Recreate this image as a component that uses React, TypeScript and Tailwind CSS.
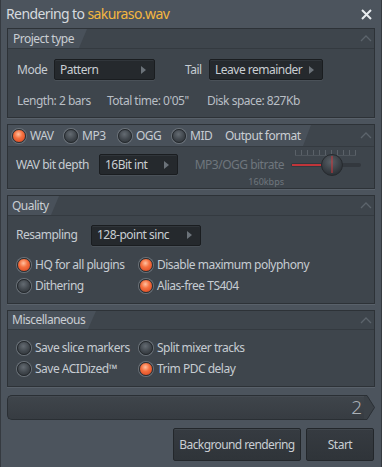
import React from "react";

function Radio({ on }: { on: boolean }) {
  return on ? (
    <span className="inline-block w-[14px] h-[14px] rounded-full shrink-0 border border-[#2b2f33] bg-[radial-gradient(circle_at_45%_35%,#ffc0a0_0%,#f5703f_40%,#d4401c_100%)] shadow-[0_0_0_1px_#6a7178]" />
  ) : (
    <span className="inline-block w-[14px] h-[14px] rounded-full shrink-0 border border-[#24282c] bg-[radial-gradient(circle_at_45%_35%,#646b72_0%,#40464c_55%,#2e3337_100%)] shadow-[0_0_0_1px_#6a7178]" />
  );
}

function Arrow() {
  return (
    <svg width="5" height="8" viewBox="0 0 5 8" className="shrink-0">
      <path d="M0 0 L5 4 L0 8 Z" fill="#6b7279" />
    </svg>
  );
}

function Dropdown({ text, w }: { text: string; w: string }) {
  return (
    <div
      className={`${w} h-[21px] shrink-0 flex items-center justify-between pl-[5px] pr-[8px] bg-[#25292d] border border-[#1a1d20] rounded-[2px] shadow-[inset_0_1px_0_#30353a,0_1px_0_#4a5158] text-[#c9ced3]`}
    >
      <span className="whitespace-nowrap">{text}</span>
      <Arrow />
    </div>
  );
}

function Chevron() {
  return (
    <svg width="12" height="7" viewBox="0 0 12 7" className="shrink-0">
      <path d="M1 6 L6 1 L11 6" fill="none" stroke="#5c646c" strokeWidth="1.3" />
    </svg>
  );
}

function Panel({
  tab,
  tabW,
  headerH,
  children,
  bodyClass,
}: {
  tab: React.ReactNode;
  tabW: string;
  headerH: string;
  children: React.ReactNode;
  bodyClass: string;
}) {
  return (
    <div className="bg-[#3e454c] border border-[#2d3237] shadow-[0_1px_0_#59616a]">
      <div className={`${headerH} flex items-stretch justify-between border-b border-[#343a40]`}>
        <div
          className={`${tabW} shrink-0 flex items-center pl-[4px] bg-[#49515a] [clip-path:polygon(0_0,100%_0,calc(100%-8px)_100%,0_100%)] text-[#c9ced3] whitespace-nowrap`}
        >
          {tab}
        </div>
        <div className="flex items-center pr-[2px]">
          <Chevron />
        </div>
      </div>
      <div className={bodyClass}>{children}</div>
    </div>
  );
}

function RadioItem({ on, label, w }: { on: boolean; label: string; w?: string }) {
  return (
    <div className={`flex items-center gap-[4px] whitespace-nowrap ${w ?? ""}`}>
      <Radio on={on} />
      <span className="text-[#c6ccd2]">{label}</span>
    </div>
  );
}

const ticks = [0, 6, 12, 18, 24, 30, 36, 42, 48, 54, 60];

export default function App() {
  return (
    <div className="w-[382px] h-[467px] bg-[#4c545d] border-x border-[#353a40] flex flex-col font-['Noto_Sans',sans-serif] text-[12px] tracking-[-0.5px] leading-none text-[#c6ccd2] overflow-hidden">
      {/* Title bar */}
      <div className="h-[28px] flex items-center justify-between pl-[5px] pr-[9px] shrink-0">
        <div className="text-[14px] tracking-[-0.6px] text-[#d6dadf] whitespace-nowrap">
          Rendering to <span className="text-[#f4b640]">sakuraso.wav</span>
        </div>
        <svg width="11" height="11" viewBox="0 0 11 11">
          <path d="M1 1 L10 10 M10 1 L1 10" stroke="#e8ecef" strokeWidth="2" />
        </svg>
      </div>

      <div className="flex flex-col px-[6px] gap-[6px]">
        {/* Project type */}
        <Panel
          tab={<span className="pl-[1px]">Project type</span>}
          tabW="w-[79px]"
          headerH="h-[20px]"
          bodyClass="h-[68px] flex flex-col pl-[9px] pt-[10px]"
        >
          <div className="flex items-center h-[21px]">
            <span className="w-[37px] whitespace-nowrap">Mode</span>
            <Dropdown text="Pattern" w="w-[101px]" />
            <span className="ml-[30px] w-[24px] whitespace-nowrap">Tail</span>
            <Dropdown text="Leave remainder" w="w-[114px]" />
          </div>
          <div className="flex items-center mt-[15px] text-[#b9bfc5] whitespace-nowrap">
            <span className="w-[90px]">Length: 2 bars</span>
            <span className="w-[100px]">Total time: 0'05''</span>
            <span>Disk space: 827Kb</span>
          </div>
        </Panel>

        {/* Output format */}
        <Panel
          tab={
            <div className="flex items-center">
              <RadioItem on label="WAV" w="w-[52px]" />
              <RadioItem on={false} label="MP3" w="w-[54px]" />
              <RadioItem on={false} label="OGG" w="w-[54px]" />
              <RadioItem on={false} label="MID" w="w-[53px]" />
              <span>Output format</span>
            </div>
          }
          tabW="w-[303px]"
          headerH="h-[22px]"
          bodyClass="h-[41px] flex items-start pl-[8px] pt-[7px]"
        >
          <span className="w-[83px] h-[21px] flex items-center whitespace-nowrap">WAV bit depth</span>
          <Dropdown text="16Bit int" w="w-[79px]" />
          <div className="w-[91px] flex flex-col items-end ml-[15px] mt-[5px] whitespace-nowrap">
            <span className="text-[#6f767d]">MP3/OGG bitrate</span>
            <span className="text-[9px] tracking-normal text-[#6f767d] mt-[6px]">160kbps</span>
          </div>
          <svg width="74" height="32" viewBox="0 0 74 32" className="ml-[5px] -mt-[7px] shrink-0">
            {ticks.map((x, i) => (
              <line key={i} x1={6.5 + x} y1="3" x2={6.5 + x} y2="8" stroke="#5a6168" strokeWidth="1" />
            ))}
            <line x1="6" y1="8.5" x2="67" y2="8.5" stroke="#4f565d" strokeWidth="1" />
            <rect x="2" y="16" width="70" height="4" rx="2" fill="#33383e" />
            <rect x="3" y="17" width="30" height="2" fill="#c0353a" />
            <defs>
              <radialGradient id="kg" cx="45%" cy="35%" r="65%">
                <stop offset="0%" stopColor="#596067" />
                <stop offset="100%" stopColor="#2a2f34" />
              </radialGradient>
            </defs>
            <circle cx="43" cy="18" r="10.5" fill="url(#kg)" stroke="#262a2e" strokeWidth="1" />
            <line x1="43" y1="9" x2="43" y2="26" stroke="#d0363a" strokeWidth="1" />
          </svg>
        </Panel>

        {/* Quality */}
        <Panel
          tab={<span>Quality</span>}
          tabW="w-[51px]"
          headerH="h-[20px]"
          bodyClass="h-[87px] flex flex-col pl-[8px] pt-[8px]"
        >
          <div className="flex items-center h-[22px]">
            <span className="w-[75px] whitespace-nowrap">Resampling</span>
            <Dropdown text="128-point sinc" w="w-[110px]" />
          </div>
          <div className="grid grid-cols-[122px_1fr] gap-y-[7px] mt-[12px] pl-[1px]">
            <RadioItem on label="HQ for all plugins" />
            <RadioItem on label="Disable maximum polyphony" />
            <RadioItem on={false} label="Dithering" />
            <RadioItem on label="Alias-free TS404" />
          </div>
        </Panel>

        {/* Miscellaneous */}
        <Panel
          tab={<span>Miscellaneous</span>}
          tabW="w-[88px]"
          headerH="h-[19px]"
          bodyClass="h-[56px] flex flex-col pl-[9px] pt-[11px]"
        >
          <div className="grid grid-cols-[122px_1fr] gap-y-[7px]">
            <RadioItem on={false} label="Save slice markers" />
            <RadioItem on={false} label="Split mixer tracks" />
            <RadioItem on={false} label="Save ACIDized™" />
            <RadioItem on label="Trim PDC delay" />
          </div>
        </Panel>

        {/* Progress bar */}
        <div className="flex h-[25px] mt-[2px]">
          <div className="flex-1 flex items-center justify-end pr-[2px] rounded-l-[5px] border-y border-l border-[#2a2f34] bg-[linear-gradient(#3f454b,#373c42)] shadow-[inset_0_1px_0_#454b52]">
            <span className="text-[19px] font-light tracking-normal text-[#aab0b6]">2</span>
          </div>
          <svg width="11" height="25" viewBox="0 0 11 25" className="shrink-0">
            <path d="M0 0.5 L3 0.5 L10.5 12.5 L3 24.5 L0 24.5" fill="#3b4147" stroke="#2a2f34" strokeWidth="1" />
          </svg>
        </div>

        {/* Buttons */}
        <div className="flex justify-end gap-[5px] mt-[2px] pr-[1px]">
          <button className="w-[128px] h-[33px] flex items-center justify-center whitespace-nowrap bg-[linear-gradient(#363b41,#2f3439)] border border-[#23272b] rounded-[2px] shadow-[inset_0_1px_0_#41474d] text-[#c9ced3] tracking-[-0.6px]">
            Background rendering
          </button>
          <button className="w-[68px] h-[33px] flex items-center justify-center bg-[linear-gradient(#363b41,#2f3439)] border border-[#23272b] rounded-[2px] shadow-[inset_0_1px_0_#41474d] text-[#c9ced3]">
            Start
          </button>
        </div>
      </div>
    </div>
  );
}
